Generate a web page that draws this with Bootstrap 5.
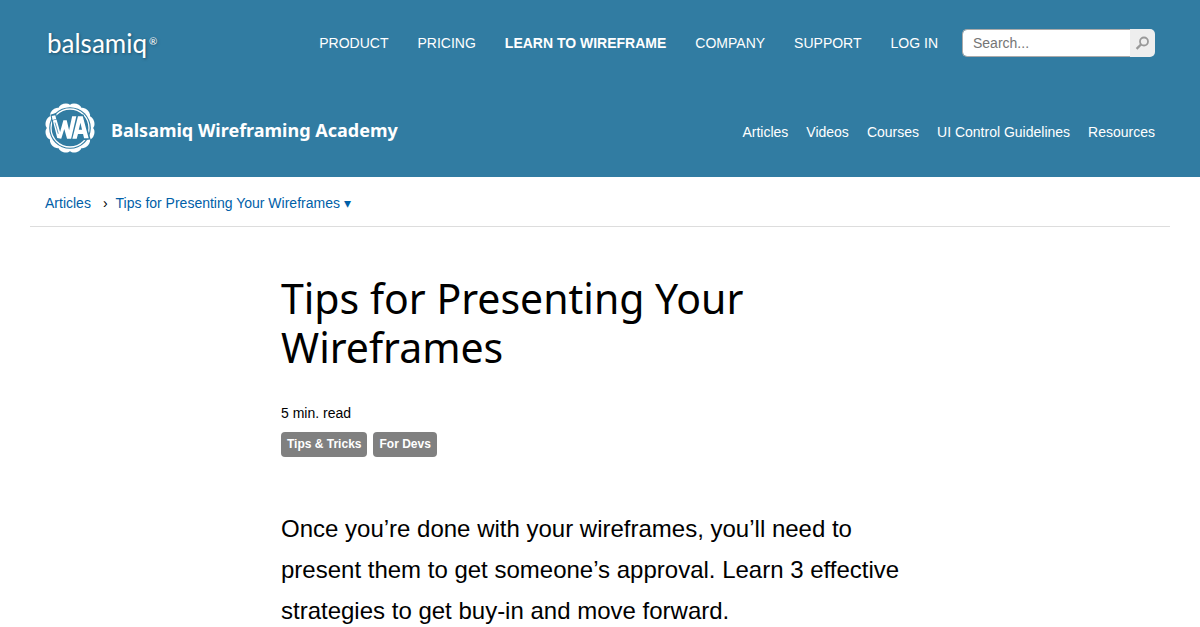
<!DOCTYPE html>
<html lang="en">
<head>
<meta charset="utf-8">
<meta name="viewport" content="width=device-width, initial-scale=1">
<title>Tips for Presenting Your Wireframes | Balsamiq</title>
<link href="https://cdn.jsdelivr.net/npm/bootstrap@5.3.0/dist/css/bootstrap.min.css" rel="stylesheet">
<style>
body { font-family: "Liberation Sans", Arial, sans-serif; font-size: 14px; line-height: 20px; color: #000; }
a { color: #0060a8; text-decoration: none; }
a:hover { text-decoration: underline; }
.site-head { background: #317ca2; padding: 29px 45px 24px; }
.site-head a { color: #fff; }
.site-logo { font-family: Lato, sans-serif; font-size: 26px; line-height: 28px; padding-left: 2px; text-shadow: 1px 1px 3px rgba(0,0,0,.35); }
.site-logo sup { font-size: 10px; top: -8px; margin-left: 2px; }
.main-nav { gap: 29px; }
.site-search { width: 193px; height: 28px; margin-left: 24px; }
.site-search .form-control { border: 1px solid #aaa; border-right: 0; border-radius: 5px 0 0 5px; padding: 0 10px; font-size: 14px; }
.site-search .form-control::placeholder { color: #757575; }
.site-search .btn { flex: none; width: 25px; padding: 0; border: 0; border-radius: 0 5px 5px 0; background: #eee; line-height: 0; }
.academy-bar { margin-top: 46px; }
.academy-name { font-family: "Noto Sans", sans-serif; font-size: 18px; font-weight: 700; line-height: 24px; padding-top: 4px; }
.academy-nav { gap: 18px; }
.crumbs { margin: 0 30px; padding: 16px 15px 13px; border-bottom: 1px solid #ddd; }
.crumbs .crumb-sep { margin: 0 8px 0 12px; }
.article { max-width: 638px; }
.article h1 { font-family: "Noto Sans", sans-serif; font-size: 41px; font-weight: 400; line-height: 49px; margin: 47px 0 31px; }
.read-time { margin-bottom: 9px; }
.topics { gap: 6px; }
.topic { background: #808080; font-size: 12px; font-weight: 700; line-height: 25px; border-radius: 4px; padding: 0 6px; }
.article a.topic { color: #fff; }
.intro { font-size: 24px; line-height: 41px; margin: 51px 0 0; }
</style>
</head>
<body>
<header class="site-head">
  <div class="d-flex align-items-center flex-wrap flex-lg-nowrap">
    <a class="site-logo me-auto" href="#">balsamiq<sup>®</sup></a>
    <nav class="main-nav d-flex flex-wrap" aria-label="Main">
      <a href="#">PRODUCT</a>
      <a href="#">PRICING</a>
      <a class="fw-bold" href="#">LEARN TO WIREFRAME</a>
      <a href="#">COMPANY</a>
      <a href="#">SUPPORT</a>
      <a href="#">LOG IN</a>
    </nav>
    <form class="site-search d-flex" role="search">
      <input class="form-control" type="search" placeholder="Search..." aria-label="Search">
      <button class="btn" type="submit" aria-label="Search">
        <svg width="15" height="15" viewBox="0 0 15 15" fill="none" stroke="#999"><circle cx="9" cy="5.5" r="4" stroke-width="1.8"/><path d="M6.2 8.3 1.6 12.9" stroke-width="2.3"/></svg>
      </button>
    </form>
  </div>
  <div class="academy-bar d-flex align-items-center flex-wrap">
    <a class="d-flex align-items-center gap-3 me-auto" href="#">
      <svg width="50" height="50" viewBox="0 0 50 50" aria-hidden="true">
        <g fill="#fff">
          <circle cx="25" cy="25" r="22.6"/>
          <g id="scallops"></g>
        </g>
        <circle cx="25" cy="25" r="20.8" fill="#317ca2"/>
        <circle cx="25" cy="25" r="19" fill="none" stroke="#fff" stroke-width="1.3"/>
        <g transform="translate(25 24) scale(1.02 1.12) translate(-25.200 -24)">
          <path d="M6.800 13.500 11 12.500 14 24 18 18 22 18 25 25 27 14.300 33 13.500 38 13.500 44.500 34.500 38 35 37 31 32 31 31 35 21 35 19 29 17 35 12 35Z" fill="#317ca2" stroke="#317ca2" stroke-width="1.5"/>
          <path d="M7.300 14.200 10.800 13.400 11.700 16.800 8.100 17.700ZM8.400 18.300 12 17.400 15.500 28.500 18.700 18 22 18 24.300 27 27.300 14.500 31.400 14.500 26.300 34.500 22.300 34.500 19.600 25.800 16.600 34.500 12.700 33.800Z" fill="#fff"/>
          <path d="M33 14.500 37.700 14.500 43.500 34 39 34 38 30.300 33 30.300 31.800 34.500 27.500 34.500ZM35.400 20.200 33.800 26.500 37 26.500Z" fill="#fff" fill-rule="evenodd"/>
          <path d="m10.500 20 3.200 10" stroke="#317ca2" stroke-width=".7"/>
        </g>
      </svg>
      <span class="academy-name">Balsamiq Wireframing Academy</span>
    </a>
    <nav class="academy-nav d-flex flex-wrap pt-2" aria-label="Academy">
      <a href="#">Articles</a>
      <a href="#">Videos</a>
      <a href="#">Courses</a>
      <a href="#">UI Control Guidelines</a>
      <a href="#">Resources</a>
    </nav>
  </div>
</header>
<nav class="crumbs" aria-label="Breadcrumb">
  <a href="#">Articles</a><span class="crumb-sep">›</span><a href="#">Tips for Presenting Your Wireframes ▾</a>
</nav>
<main class="article mx-auto">
  <h1>Tips for Presenting Your Wireframes</h1>
  <p class="read-time">5 min. read</p>
  <div class="topics d-flex flex-wrap">
    <a class="topic" href="#">Tips &amp; Tricks</a>
    <a class="topic" href="#">For Devs</a>
  </div>
  <p class="intro">Once you’re done with your wireframes, you’ll need to present them to get someone’s approval. Learn 3 effective strategies to get buy-in and move forward.</p>
</main>
<script>
  // Twelve rounded bumps around the edge of the academy seal
  const scallops = document.getElementById('scallops');
  for (let i = 0; i < 12; i++) {
    const a = (i * 30 + 15) * Math.PI / 180;
    const c = document.createElementNS('http://www.w3.org/2000/svg', 'ellipse');
    c.setAttribute('rx', 4.2);
    c.setAttribute('ry', 6.4);
    c.setAttribute('transform', `translate(${25 + 20.800 * Math.cos(a)} ${25 + 20.800 * Math.sin(a)}) rotate(${i * 30 + 15})`);
    scallops.appendChild(c);
  }
</script>
<script src="https://cdn.jsdelivr.net/npm/bootstrap@5.3.0/dist/js/bootstrap.bundle.min.js"></script>
</body>
</html>
